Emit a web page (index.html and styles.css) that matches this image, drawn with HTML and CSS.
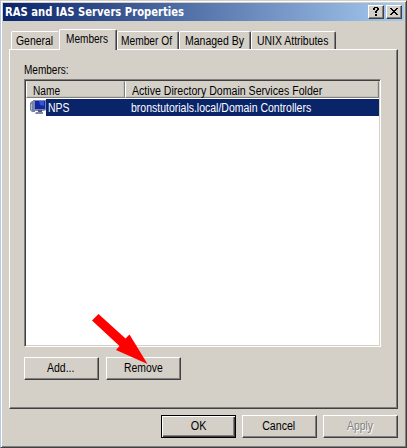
FILE: index.html
```html
<!DOCTYPE html>
<html lang="en">
<head>
<meta charset="utf-8">
<title>RAS and IAS Servers Properties</title>
<link rel="stylesheet" href="styles.css">
</head>
<body>
<main class="window">
  <header class="titlebar">
    <h1><span class="t title-text">RAS and IAS Servers Properties</span></h1>
    <div class="caption">
      <button class="cap help" aria-label="Help"><svg width="6" height="9" viewBox="0 0 6 9"><path d="M1 0h4v1h1v2h-1v1h-1v2h-2v-2h1v-1h1v-2h-2v2h-2v-2h1zM2 7h2v2h-2z"/></svg></button>
      <button class="cap" aria-label="Close"><svg width="8" height="7" viewBox="0 0 8 7"><path d="M0 0h2v1h1v1h2v-1h1v-1h2v1h-1v1h-1v1h-1v1h1v1h1v1h1v1h-2v-1h-1v-1h-2v1h-1v1h-2v-1h1v-1h1v-1h1v-1h-1v-1h-1v-1h-1z"/></svg></button>
    </div>
  </header>
  <nav class="tabs">
    <div class="tab general"><span class="t">General</span></div>
    <div class="tab members active"><span class="t">Members</span></div>
    <div class="tab member-of"><span class="t">Member Of</span></div>
    <div class="tab managed"><span class="t">Managed By</span></div>
    <div class="tab unix"><span class="t">UNIX Attributes</span></div>
  </nav>
  <section class="panel">
    <div class="label"><span class="t">Members:</span></div>
    <div class="list">
      <div class="head">
        <div class="th name"><span class="t">Name</span></div>
        <div class="th folder"><span class="t">Active Directory Domain Services Folder</span></div>
      </div>
      <div class="row">
        <svg class="icon" width="16" height="16" viewBox="0 0 16 16">
          <path d="M0 4l2-2h3v11H2l-2-2z" fill="#7683a8"/>
          <path d="M1 5h1v6H1z" fill="#b0b9d2"/>
          <path d="M3 1h13v10l-2 1H4z" fill="#7c87b0"/>
          <path d="M5 2h10v8H5z" fill="#1527a0"/>
          <path d="M9 2h5v5l-4-1z" fill="#3156d8"/>
          <path d="M8 11h4v2H8z" fill="#4c5980"/>
          <path d="M6 13h7v2H5z" fill="#7f8aae"/>
        </svg>
        <div class="selected">
          <div class="nps"><span class="t">NPS</span></div>
          <div class="path"><span class="t">bronstutorials.local/Domain Controllers</span></div>
        </div>
      </div>
    </div>
    <div class="actions">
      <button class="btn add"><span class="t">Add...</span></button>
      <button class="btn remove"><span class="t">Remove</span></button>
    </div>
  </section>
  <footer>
    <button class="btn ok"><span class="t">OK</span></button>
    <button class="btn cancel"><span class="t">Cancel</span></button>
    <button class="btn apply"><span class="t">Apply</span></button>
  </footer>
  <svg class="arrow" width="60" height="54" viewBox="0 0 60 54"><path d="M7.500 1L34.500 25.500L38.500 21.500L56.500 51L25 37L28.500 33L1 7.500Z" fill="#fe0000"/></svg>
</main>
</body>
</html>
```
FILE: styles.css
```css
* { box-sizing: border-box; }
body {
  margin: 0;
  background: #d4d0c8;
  color: #000;
  font: 12px/14px "Liberation Sans", Arial, sans-serif;
}
.window {
  position: relative;
  width: 407px;
  height: 448px;
  background: #d4d0c8;
  border: 1px solid;
  border-color: #d4d0c8 #404040 #404040 #b5c7e2;
  box-shadow: inset 1px 1px #fff, inset -1px -1px #808080;
  padding: 2px;
}
.t {
  display: inline-block;
  white-space: nowrap;
  transform-origin: 0 50%;
  transform: scaleX(var(--sx, 1));
}
.titlebar {
  display: flex;
  justify-content: space-between;
  align-items: center;
  height: 18px;
  padding: 0 2px;
  background: linear-gradient(90deg, #0a246a, #a6caf0);
}
h1 {
  margin: 0;
  color: #fff;
  font: bold 12px/16px "DejaVu Sans Condensed", "DejaVu Sans", sans-serif;
}
.title-text { --sx: .93; }
.caption { display: flex; gap: 2px; }
.cap {
  display: flex;
  align-items: center;
  justify-content: center;
  width: 16px;
  height: 14px;
  padding: 0;
  border: 1px solid;
  border-color: #fff #404040 #404040 #fff;
  box-shadow: inset -1px -1px #808080;
  background: #d4d0c8;
}
.cap svg { margin: 0 0 1px; }
.cap.help svg { margin-top: 0; }
.tabs {
  position: relative;
  z-index: 1;
  display: flex;
  align-items: flex-end;
  height: 29px;
  padding-left: 8px;
  margin-bottom: -1px;
}
.tab {
  height: 18px;
  margin-bottom: 1px;
  padding: 2px 0 0 4px;
  border: 1px solid;
  border-color: #fff #404040 transparent #fff;
  border-bottom: 0;
  border-radius: 2px 2px 0 0;
  box-shadow: inset -1px 0 #808080;
}
.tab.active {
  height: 21px;
  margin-bottom: 0;
  padding: 2px 0 0 6px;
  background: #d4d0c8;
}
.general { width: 48px; --sx: .867; border-right-color: transparent; box-shadow: none; }
.members { width: 58px; --sx: .84; }
.tab.member-of { width: 62px; padding-left: 3px; --sx: .85; }
.managed { width: 72px; padding-left: 5px; --sx: .875; }
.unix { width: 85px; padding-left: 5px; --sx: .87; }
.panel {
  width: 389px;
  height: 360px;
  margin-left: 6px;
  padding: 13px 14px 0;
  border: 1px solid;
  border-color: #fff #404040 #404040 #fff;
  box-shadow: inset -1px -1px #808080;
}
.label { height: 16px; --sx: .835; }
.list {
  width: 357px;
  height: 268px;
  border: 1px solid;
  border-color: #808080 #fff #fff #808080;
  box-shadow: inset 1px 1px #404040, inset -1px -1px #d4d0c8;
  padding: 1px;
  background: #fff;
}
.head { display: flex; height: 17px; }
.th {
  background: #d4d0c8;
  border: 1px solid;
  border-color: #d4d0c8 #808080 #808080 #fff;
  box-shadow: inset -1px -1px #c6c2ba;
  padding: 2px 0 0 6px;
}
.name { width: 99px; --sx: .845; }
.folder { flex: 1; --sx: .883; }
.row { display: flex; height: 18px; padding-top: 1px; }
.icon { margin: 0 0 0 4px; flex: none; }
.selected {
  display: flex;
  flex: 1;
  background: #0a246a;
  color: #fff;
}
.nps { width: 83px; padding: 2px 0 0 2px; --sx: .87; }
.path { padding-top: 2px; margin-left: 2px; --sx: .874; }
.actions { display: flex; gap: 7px; margin-top: 10px; }
.btn {
  width: 75px;
  height: 23px;
  padding: 0 0 1px;
  border: 1px solid;
  border-color: #fff #404040 #404040 #fff;
  box-shadow: inset -1px -1px #808080;
  background: #d4d0c8;
  color: #000;
  font: inherit;
}
.btn .t { transform-origin: 50% 50%; }
.add { --sx: .875; padding-right: 2px; }
.remove { --sx: .865; padding-right: 1px; }
footer {
  display: flex;
  justify-content: flex-end;
  gap: 6px;
  padding: 6px 6px 0 0;
}
.ok {
  --sx: .9;
  border-color: #000;
  box-shadow: inset 1px 1px #fff, inset -1px -1px #404040, inset -2px -2px #808080;
}
.cancel { --sx: .885; padding-right: 2px; }
.apply { --sx: .87; color: #808080; text-shadow: 1px 1px #fff; }
.arrow { position: absolute; left: 90px; top: 312px; }
```
